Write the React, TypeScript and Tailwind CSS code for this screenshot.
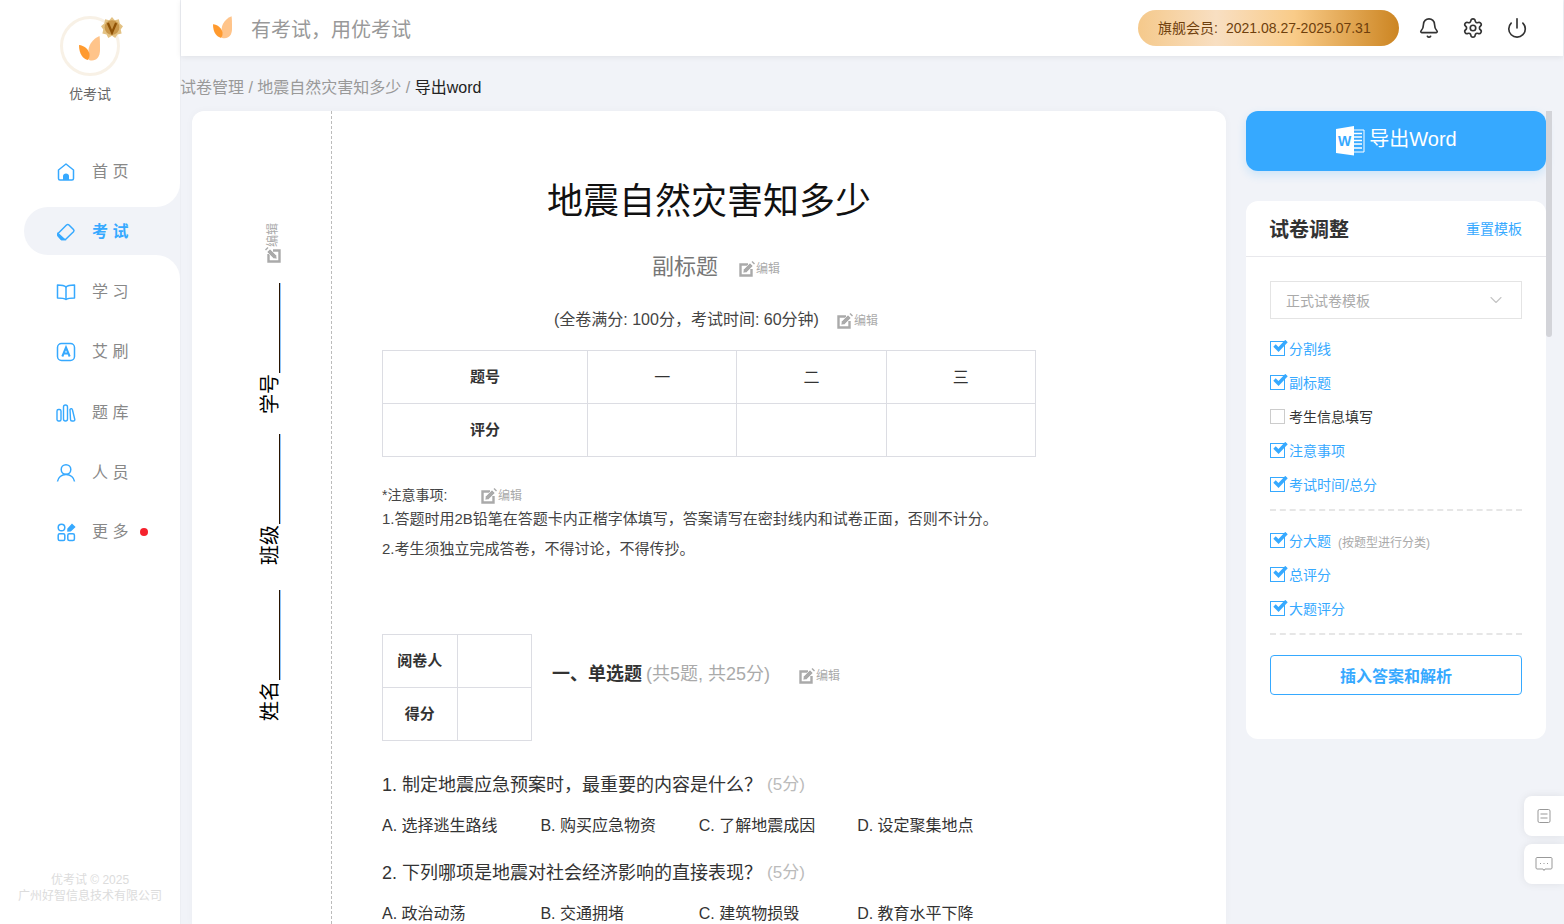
import { Bell, ChevronDown, Power, Settings } from "lucide-react";

const navBelow = [
  { label: "艾 刷", icon: <AIcon /> },
  { label: "题 库", icon: <BarsIcon /> },
  { label: "人 员", icon: <UserIcon /> },
];

const optionsA = ["A. 选择逃生路线", "B. 购买应急物资", "C. 了解地震成因", "D. 设定聚集地点"];
const optionsB = ["A. 政治动荡", "B. 交通拥堵", "C. 建筑物损毁", "D. 教育水平下降"];

function Leaf({ className }: { className: string }) {
  return (
    <svg viewBox="0 0 21 25" className={className}>
      <path d="M20.500 0C14 3 10 8 9.500 14L10 24C16 26 21 22 21 14C21 8 21 3 20.500 0Z" fill="#ffc48a" />
      <path d="M0 9C5 9.500 9.500 13 10.500 18C10.800 20.500 10 23 9 24C4 23 0 18 0 9Z" fill="#ff9a2e" />
    </svg>
  );
}

function HomeIcon() {
  return (
    <svg viewBox="0 0 20 20" className="w-5 h-5" fill="none" stroke="#36a9ff" strokeWidth="1.500">
      <path d="M2.500 8L10 2L17.500 8V16.500C17.500 17.300 17 18 16 18H4C3 18 2.500 17.300 2.500 16.500Z" strokeLinejoin="round" />
      <path d="M7 18V14C7 12.500 8.300 11.500 10 11.500C11.700 11.500 13 12.500 13 14V18Z" fill="#36a9ff" stroke="none" />
    </svg>
  );
}

function EraserIcon() {
  return (
    <svg viewBox="0 0 20 20" className="w-5 h-5" fill="none" stroke="#36a9ff" strokeWidth="1.500">
      <path d="M2 11.500L10.500 3C11.300 2.300 12.300 2.300 13 3L17.500 7.500C18.200 8.200 18.200 9 17.500 9.800L9.500 17.500H5.500L2.300 14C1.700 13.300 1.500 12.300 2 11.500Z" strokeLinejoin="round" />
      <path d="M2 11.500L8.500 17.500H5.500L2.300 14C1.700 13.300 1.500 12.300 2 11.500Z" fill="#36a9ff" />
    </svg>
  );
}

function BookIcon() {
  return (
    <svg viewBox="0 0 20 20" className="w-5 h-5" fill="none" stroke="#36a9ff" strokeWidth="1.500">
      <path d="M10 5C8.500 3.500 6 3 1.500 3V16C6 16 8.500 16.300 10 17.500C11.500 16.300 14 16 18.500 16V3C14 3 11.500 3.500 10 5Z" strokeLinejoin="round" />
      <path d="M10 5V17.500" />
    </svg>
  );
}

function AIcon() {
  return (
    <svg viewBox="0 0 20 20" className="w-5 h-5" fill="none" stroke="#36a9ff" strokeWidth="1.500">
      <rect x="1.500" y="1.500" width="17" height="17" rx="4" />
      <path d="M6.300 14.500L10 5.500L13.700 14.500M7.500 11.500H12.500" strokeWidth="2" />
    </svg>
  );
}

function BarsIcon() {
  return (
    <svg viewBox="0 0 20 20" className="w-5 h-5" fill="none" stroke="#36a9ff" strokeWidth="1.400">
      <rect x="1" y="6.500" width="4" height="11.500" rx="1.500" />
      <rect x="7.500" y="2" width="4" height="16" rx="2" />
      <path d="M14 6.500C15 5 16 5.500 16.500 7L18.800 16.500C19 17.500 18.300 18 17.500 18H16C15 18 14.500 17.500 14.500 16.500Z" />
    </svg>
  );
}

function UserIcon() {
  return (
    <svg viewBox="0 0 20 20" className="w-5 h-5" fill="none" stroke="#36a9ff" strokeWidth="1.500">
      <circle cx="10" cy="6.500" r="4.800" />
      <path d="M1.500 18.500C2 14.500 5.500 11.500 10 11.500C14.500 11.500 18 14.500 18.500 18.500" />
    </svg>
  );
}

function MoreIcon() {
  return (
    <svg viewBox="0 0 20 20" className="w-5 h-5" fill="none" stroke="#36a9ff" strokeWidth="1.500">
      <circle cx="5.500" cy="5.500" r="3.300" />
      <rect x="2.200" y="11.800" width="6.600" height="6.600" rx="1.500" />
      <rect x="11.800" y="11.800" width="6.600" height="6.600" rx="1.500" />
      <path d="M12 7L16 2.500L18.500 5L14.500 8.800L12 9Z" fill="#36a9ff" />
    </svg>
  );
}

function PencilIcon() {
  return (
    <svg viewBox="0 0 16 16" className="w-4 h-4 shrink-0" fill="none">
      <path d="M9 3.500H1.500V14.500H12.500V8" stroke="#aaa" strokeWidth="2.400" />
      <path d="M4.500 8.500L11 2L14 5L7.500 11.500L4 12Z" fill="#aaa" stroke="#fff" strokeWidth="0.600" />
      <path d="M12.500 1L13.500 0L16 2.500L15 3.500Z" fill="#aaa" />
    </svg>
  );
}

function EditLink({ className }: { className: string }) {
  return (
    <span className={`inline-flex items-center text-[12px] leading-[16px] text-[#aaa] ${className}`}>
      <PencilIcon />
      <span className="ml-px">编辑</span>
    </span>
  );
}

function WordIcon() {
  return (
    <svg viewBox="0 0 30 30" className="w-[30px] h-[30px]">
      <path d="M14 4H29V26H14" fill="none" stroke="#fff" strokeWidth="1" />
      <path d="M18 7.500H27M18 11H27M18 14.500H27M18 18H27M18 22H27" stroke="#fff" strokeWidth="1.500" />
      <path d="M1 3L19 0V29.500L1 27Z" fill="#fff" />
      <text x="3" y="19.500" fontSize="14" fontWeight="700" fill="#36a9ff" fontFamily="Liberation Sans">W</text>
    </svg>
  );
}

function Check({ label, checked = true, note }: { label: string; checked?: boolean; note?: string }) {
  return (
    <div className="h-[34px] flex items-center gap-1">
      <span className={`relative -mt-[1px] w-[15px] h-[15px] shrink-0 border-[1.500px] ${checked ? "border-[#36a9ff]" : "border-[#ccc]"}`}>
        {checked && (
          <svg viewBox="0 0 15 12" className="absolute left-[2px] -top-[2px] w-[15px] h-[12px]">
            <path d="M1.500 5.500L5.500 9.500L13.500 1" fill="none" stroke="#36a9ff" strokeWidth="3.400" />
          </svg>
        )}
      </span>
      <span className={`text-[14px] ${checked ? "text-[#36a9ff]" : "text-[#333]"}`}>{label}</span>
      {note && <span className="ml-[3px] mt-[4px] text-[12px] text-[#aaa]">{note}</span>}
    </div>
  );
}

function BindingField({ label, mt }: { label: string; mt: string }) {
  return (
    <div className={`flex flex-col items-end ${mt}`}>
      <div className="w-[2px] h-[90px] border-l border-r border-l-[#2a1400] border-r-[#8fc4f7]" />
      <span className="mt-px mr-px [writing-mode:vertical-rl] [text-orientation:sideways] rotate-180 text-[20px] leading-[20px] text-black">
        {label}
      </span>
    </div>
  );
}

function Options({ items, className }: { items: string[]; className: string }) {
  return (
    <div className={`flex h-6 items-center text-[16px] text-[#333] ${className}`}>
      {items.map((o) => (
        <span key={o} className="w-[158.400px] shrink-0 whitespace-nowrap">
          {o}
        </span>
      ))}
    </div>
  );
}

export default function App() {
  return (
    <div
      className="relative flex h-[924px] w-full overflow-hidden bg-[#f1f3f8]"
      style={{ fontFamily: '"Liberation Sans","Noto Sans CJK SC",sans-serif' }}
    >
      {/* sidebar */}
      <aside className="w-[180px] shrink-0 bg-white flex flex-col">
        <div className="h-[135px] flex flex-col items-center pt-4">
          <div className="relative w-[60px] h-[60px] rounded-full border-[3px] border-[#f8f1e6] flex items-center justify-center">
            <Leaf className="w-[21px] h-[25px] mt-[5px] -ml-px" />
            <svg viewBox="0 0 24 24" className="absolute -right-[6px] -top-[2px] w-[22px] h-[22px]">
              <path
                d="M12 0L15 3.500L19.500 2.500L20.500 7L24 10L21.500 13.500L22.500 18L18 19L15.500 23L12 20.500L8 23L6 19L1.500 18L2.500 13.500L0 10L3.500 7L4.500 2.500L9 3.500Z"
                fill="#e3c284"
              />
              <circle cx="12" cy="11.500" r="8" fill="#c9974a" />
              <path d="M7.500 6.500L12 17L16.500 6.500" fill="none" stroke="#8f5206" strokeWidth="2.500" />
            </svg>
          </div>
          <div className="mt-2 text-[14px] leading-[20px] text-[#666]">优考试</div>
        </div>
        <nav className="flex flex-col">
          <div className="bg-[#f1f3f8]">
            <div className="h-[72px] pt-[2px] bg-white rounded-br-[24px] flex items-center pl-[56px] gap-4 text-[16px] text-[#888]">
              <HomeIcon />
              <span>首 页</span>
            </div>
          </div>
          <div className="bg-white pl-6">
            <div className="h-12 pt-[2px] bg-[#f1f3f8] rounded-l-[24px] flex items-center pl-8 gap-4 text-[16px] font-bold text-[#36a9ff]">
              <EraserIcon />
              <span>考 试</span>
            </div>
          </div>
          <div className="bg-[#f1f3f8]">
            <div className="h-[72px] pt-[2px] bg-white rounded-tr-[24px] flex items-center pl-[56px] gap-4 text-[16px] text-[#888]">
              <BookIcon />
              <span>学 习</span>
            </div>
          </div>
          {navBelow.map((n, i) => (
            <div
              key={n.label}
              className={`h-[60px] pt-[2px] flex items-center pl-[56px] gap-4 text-[16px] text-[#888] ${i === 0 ? "-mt-[6px]" : ""} ${i === 1 ? "mt-px" : ""}`}
            >
              {n.icon}
              <span>{n.label}</span>
            </div>
          ))}
          <div className="h-[60px] flex items-center pl-[56px] gap-4 text-[16px] text-[#888]">
            <MoreIcon />
            <span>更 多</span>
            <span className="-ml-[4px] w-2 h-2 rounded-full bg-[#f5222d]" />
          </div>
        </nav>
        <div className="mt-auto pb-[20px] text-center text-[12px] leading-[16px] text-[#dcdcdc]">
          <div>优考试 © 2025</div>
          <div>广州好智信息技术有限公司</div>
        </div>
      </aside>

      <div className="flex-1 min-w-0 flex flex-col border-l border-[#eceef3]">
        {/* top bar */}
        <header className="h-14 shrink-0 mr-px bg-white shadow-[0_1px_6px_rgba(0,0,0,0.08)] flex items-center pl-[32px] pr-[35px] z-10">
          <Leaf className="w-[19px] h-[23px] -mt-[1px]" />
          <span className="ml-[19px] mt-[3px] text-[20px] text-[#999]">有考试，用优考试</span>
          <div className="ml-auto h-9 w-[261px] rounded-full bg-[linear-gradient(90deg,#f5c98b_0%,#f8dfc2_30%,#f9cb88_60%,#cc8522_100%)] flex items-center pl-[20px] text-[14px] text-[#6f3f0c]">
            旗舰会员:<span className="ml-[8px]">2021.08.27-2025.07.31</span>
          </div>
          <Bell className="ml-[19px] w-[22px] h-[22px] text-[#333]" strokeWidth={1.800} />
          <Settings className="ml-[22px] w-[22px] h-[22px] text-[#333]" strokeWidth={1.800} />
          <Power className="ml-[22px] w-[22px] h-[22px] text-[#333]" strokeWidth={1.800} />
        </header>

        {/* breadcrumb */}
        <div className="h-[55px] shrink-0 pt-[22px] -ml-px text-[16px] leading-[20px] text-[#999]">
          试卷管理 / 地震自然灾害知多少 / <span className="text-[#222]">导出word</span>
        </div>

        <div className="flex-1 min-h-0 flex pl-[11px]">
          {/* paper */}
          <section className="w-[1034px] shrink-0 bg-white rounded-t-[12px] flex shadow-[0_0_8px_rgba(0,0,0,0.03)]">
            <div className="w-[140px] shrink-0 border-r border-dashed border-[#bbb] pl-[66px] pt-[111px]">
              <div className="w-[23px] flex flex-col items-end">
                <span className="inline-flex items-center [writing-mode:vertical-rl] [text-orientation:sideways] rotate-180 text-[12px] leading-[14px] text-[#aaa] h-[41px]">
                  <span className="rotate-90">
                    <PencilIcon />
                  </span>
                  <span>编辑</span>
                </span>
                <BindingField label="学号" mt="mt-[20px]" />
                <BindingField label="班级" mt="mt-[20px]" />
                <BindingField label="姓名" mt="mt-[25px]" />
              </div>
            </div>

            <div className="w-[704px] pl-[50px] shrink-0">
              <h1 className="mt-[64px] h-[54px] leading-[54px] text-center text-[36px] font-normal text-[#111]">地震自然灾害知多少</h1>
              <div className="mt-[22px] h-[30px] flex items-center pl-[270px]">
                <span className="text-[22px] text-[#777]">副标题</span>
                <EditLink className="ml-[21px] mt-[6px]" />
              </div>
              <div className="mt-[27px] h-6 flex items-center pl-[172px]">
                <span className="text-[16px] text-[#444] whitespace-nowrap">(全卷满分: 100分，考试时间: 60分钟)</span>
                <EditLink className="ml-[18px] mt-[2px]" />
              </div>

              <table className="mt-[18px] w-[654px] border-collapse table-fixed text-center text-[#333]">
                <tbody>
                  <tr className="h-[53px]">
                    <td className="w-[205px] border border-[#dcdde3] text-[15px] font-bold">题号</td>
                    <td className="border border-[#dcdde3] pt-[2px] text-[16px]">一</td>
                    <td className="border border-[#dcdde3] pt-[2px] text-[16px]">二</td>
                    <td className="border border-[#dcdde3] pt-[2px] text-[16px]">三</td>
                  </tr>
                  <tr className="h-[53px]">
                    <td className="border border-[#dcdde3] text-[15px] font-bold">评分</td>
                    <td className="border border-[#dcdde3]" />
                    <td className="border border-[#dcdde3]" />
                    <td className="border border-[#dcdde3]" />
                  </tr>
                </tbody>
              </table>

              <div className="mt-[28px] h-5 flex items-center text-[14px] text-[#444]">
                <span className="w-[99px]">*注意事项:</span>
                <EditLink className="mt-[1px]" />
              </div>
              <p className="mt-[2px] h-6 leading-[24px] text-[15px] text-[#444] whitespace-nowrap">
                1.答题时用2B铅笔在答题卡内正楷字体填写，答案请写在密封线内和试卷正面，否则不计分。
              </p>
              <p className="mt-[6px] h-6 leading-[24px] text-[15px] text-[#444]">2.考生须独立完成答卷，不得讨论，不得传抄。</p>

              <div className="mt-[73px] flex items-center">
                <table className="w-[150px] border-collapse table-fixed text-center text-[15px] font-bold text-[#333]">
                  <tbody>
                    <tr className="h-[53px]">
                      <td className="border border-[#dcdde3]">阅卷人</td>
                      <td className="border border-[#dcdde3]" />
                    </tr>
                    <tr className="h-[53px]">
                      <td className="border border-[#dcdde3]">得分</td>
                      <td className="border border-[#dcdde3]" />
                    </tr>
                  </tbody>
                </table>
                <div className="ml-[20px] -mt-[26px] flex items-center">
                  <span className="text-[18px] font-bold text-[#333] whitespace-nowrap">一、单选题</span>
                  <span className="ml-1 text-[18px] text-[#aaa] whitespace-nowrap">(共5题, 共25分)</span>
                  <EditLink className="ml-[29px] mt-[3px]" />
                </div>
              </div>

              <div className="mt-[30px] h-7 flex items-center text-[18px] text-[#333] whitespace-nowrap">
                1. 制定地震应急预案时，最重要的内容是什么？
                <span className="ml-[5px] text-[17px] text-[#bbb]">(5分)</span>
              </div>
              <Options items={optionsA} className="mt-[15px]" />
              <div className="mt-[21px] h-7 flex items-center text-[18px] text-[#333] whitespace-nowrap">
                2. 下列哪项是地震对社会经济影响的直接表现？
                <span className="ml-[5px] text-[17px] text-[#bbb]">(5分)</span>
              </div>
              <Options items={optionsB} className="mt-[15px]" />
            </div>
          </section>

          {/* right column */}
          <div className="ml-[20px] w-[300px] shrink-0">
            <button className="w-full h-[60px] rounded-[12px] bg-[#36a9ff] shadow-[0_4px_10px_rgba(54,169,255,0.2)] flex items-center justify-center gap-[4px] text-[20px] text-white">
              <WordIcon />
              <span className="-mt-[5px]">导出Word</span>
            </button>
            <div className="mt-[30px] h-[538px] rounded-[12px] bg-white px-6">
              <div className="-mx-6 h-[56px] pt-[2px] pl-[23px] pr-6 border-b border-[#e8e8ec] flex items-center justify-between">
                <span className="text-[20px] font-bold text-[#333]">试卷调整</span>
                <span className="text-[14px] text-[#36a9ff]">重置模板</span>
              </div>
              <div className="mt-6 h-[38px] pt-[2px] border border-[#e4e4e4] flex items-center justify-between pl-[15px] pr-[15px] text-[14px] text-[#aaa]">
                正式试卷模板
                <ChevronDown className="w-5 h-5 -mt-[2px] text-[#c4c4c4]" strokeWidth={1.300} />
              </div>
              <div className="mt-[13px]">
                <Check label="分割线" />
                <Check label="副标题" />
                <Check label="考生信息填写" checked={false} />
                <Check label="注意事项" />
                <Check label="考试时间/总分" />
              </div>
              <div className="mt-[7px] border-t-2 border-dashed border-[#e6e6e6]" />
              <div className="mt-[13px]">
                <Check label="分大题" note="(按题型进行分类)" />
                <Check label="总评分" />
                <Check label="大题评分" />
              </div>
              <div className="mt-[7px] border-t-2 border-dashed border-[#e6e6e6]" />
              <button className="mt-5 w-full h-10 pt-[3px] rounded-[4px] border border-[#36a9ff] text-[16px] font-bold text-[#36a9ff]">
                插入答案和解析
              </button>
            </div>
          </div>

          {/* scrollbar */}
          <div className="w-[6px] h-[226px] shrink-0 bg-[#d3d4d9] rounded-b-[3px]" />
        </div>
      </div>

      {/* floating buttons */}
      <div className="absolute right-0 top-[796px] flex flex-col gap-2">
        <div className="w-10 h-10 rounded-l-[8px] bg-white shadow-[0_0_8px_rgba(0,0,0,0.08)] flex items-center justify-center">
          <svg viewBox="0 0 16 16" className="w-4 h-4" fill="none" stroke="#999" strokeWidth="1">
            <rect x="2" y="1.500" width="12" height="13" rx="1.500" />
            <path d="M4.500 6H11.500M4.500 10H11.500" />
          </svg>
        </div>
        <div className="w-10 h-10 rounded-l-[8px] bg-white shadow-[0_0_8px_rgba(0,0,0,0.08)] flex items-center justify-center">
          <svg viewBox="0 0 18 16" className="w-[18px] h-4" fill="none" stroke="#999" strokeWidth="1">
            <path d="M2 1.500H16C16.500 1.500 17 2 17 2.500V12C17 12.500 16.500 13 16 13H10L9 14.500L8 13H2C1.500 13 1 12.500 1 12V2.500C1 2 1.500 1.500 2 1.500Z" />
            <path d="M5 7.500H6M8.500 7.500H9.500M12 7.500H13" />
          </svg>
        </div>
      </div>
    </div>
  );
}
